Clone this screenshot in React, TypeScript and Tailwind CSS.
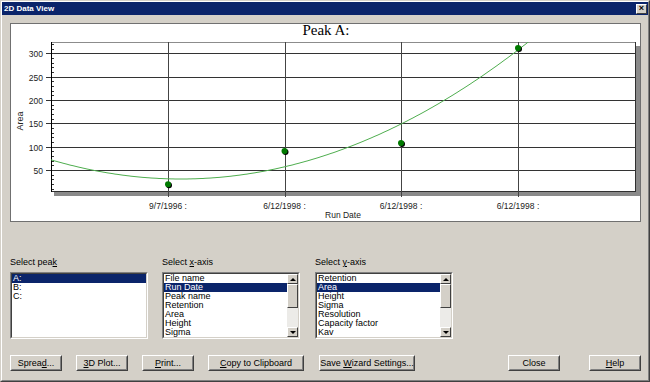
import React from "react";

const ui = "font-['Liberation_Sans_Narrow','Liberation_Sans',sans-serif] text-[9px]";

const yOf = (v: number) => 193.5 - v * 0.4667;
const colX = [168, 284.5, 401, 518];
const points = [
  { x: 168, v: 20 },
  { x: 284.5, v: 91 },
  { x: 401, v: 108 },
  { x: 518, v: 312 },
];

// fitted curve in screen coords
const curve = (() => {
  const pts: string[] = [];
  for (let x = 51; x <= 540; x += 2) {
    const y = 179 - 0.001136 * (x - 181) * (x - 181);
    pts.push(`${x},${y.toFixed(1)}`);
  }
  return pts.join(" ");
})();

function Chart() {
  const majors = [50, 100, 150, 200, 250, 300];
  const minors: number[] = [];
  for (let v = 10; v <= 320; v += 10) if (v % 50 !== 0) minors.push(v);

  return (
    <svg width={629} height={184} className="block font-['Liberation_Sans',sans-serif]">
      <defs>
        <clipPath id="plot">
          <rect x={51} y={42} width={584} height={149} />
        </clipPath>
      </defs>
      <g transform="translate(-11,-37)">
        {/* shadow */}
        <rect x={636} y={46} width={5} height={150} fill="#8a8a8a" />
        <rect x={54} y={192} width={587} height={4} fill="#8a8a8a" />

        <rect x={51} y={42} width={584} height={149} fill="#fff" />
        <line x1={51} y1={42.5} x2={635} y2={42.5} stroke="#8c8c8c" />
        <line x1={635.5} y1={42} x2={635.5} y2={192} stroke="#303030" />
        <line x1={51} y1={191.5} x2={636} y2={191.5} stroke="#303030" />

        {majors.map((v) => (
          <g key={v}>
            <line x1={46} y1={Math.round(yOf(v)) + 0.5} x2={635} y2={Math.round(yOf(v)) + 0.5} stroke="#333" />
            <text x={43} y={Math.round(yOf(v)) + 3.5} fontSize={8.5} textAnchor="end" fill="#222">
              {v}
            </text>
          </g>
        ))}
        {minors.map((v) => (
          <line key={v} x1={51} y1={Math.round(yOf(v)) + 0.5} x2={54} y2={Math.round(yOf(v)) + 0.5} stroke="#333" />
        ))}

        {colX.map((x, i) => (
          <g key={i}>
            <line x1={Math.round(x) + 0.5} y1={42} x2={Math.round(x) + 0.5} y2={197} stroke="#444" />
            <text x={x} y={209} fontSize={8.5} textAnchor="middle" fill="#222">
              {i === 0 ? "9/7/1996 :" : "6/12/1998 :"}
            </text>
          </g>
        ))}

        <line x1={51.5} y1={42} x2={51.5} y2={192} stroke="#000" />

        <polyline points={curve} fill="none" stroke="#4fae4f" strokeWidth={1} clipPath="url(#plot)" />

        {points.map((p, i) => (
          <g key={i}>
            <circle cx={p.x + 1} cy={yOf(p.v) + 1} r={3} fill="#000" />
            <circle cx={p.x} cy={yOf(p.v)} r={3} fill="#007a00" />
          </g>
        ))}

        <text x={343} y={218} fontSize={8.5} textAnchor="middle" fill="#222">
          Run Date
        </text>
        <text transform="translate(23,121) rotate(-90)" fontSize={9} textAnchor="middle" fill="#222">
          Area
        </text>
      </g>
    </svg>
  );
}

function Arrow({ up }: { up: boolean }) {
  return (
    <div className="h-[10px] bg-[#d4d0c8] border border-t-white border-l-white border-r-[#404040] border-b-[#404040] flex items-center justify-center">
      {up ? (
        <div className="w-0 h-0 border-x-[3px] border-x-transparent border-b-[3px] border-b-black" />
      ) : (
        <div className="w-0 h-0 border-x-[3px] border-x-transparent border-t-[3px] border-t-black" />
      )}
    </div>
  );
}

function ScrollBar() {
  return (
    <div className="w-[11px] h-full flex flex-col bg-[#ecebe8]">
      <Arrow up />
      <div className="h-[24px] bg-[#d4d0c8] border border-t-white border-l-white border-r-[#404040] border-b-[#404040]" />
      <div className="flex-1" />
      <Arrow up={false} />
    </div>
  );
}

function ListBox({ items, selected, scroll }: { items: string[]; selected: number; scroll?: boolean }) {
  return (
    <div className="w-[138px] h-[67px] border border-t-[#808080] border-l-[#808080] border-r-white border-b-white">
      <div className="h-full bg-white border border-t-[#404040] border-l-[#404040] border-r-[#d4d0c8] border-b-[#d4d0c8] flex overflow-hidden">
        <div className="flex-1 overflow-hidden">
          {items.map((it, i) => (
            <div
              key={it}
              className={`h-[9px] leading-[9px] pl-[1px] whitespace-nowrap ${
                i === selected ? "bg-[#0a246a] text-white" : "text-black"
              }`}
            >
              {it}
            </div>
          ))}
        </div>
        {scroll && <ScrollBar />}
      </div>
    </div>
  );
}

function Btn({ w, children }: { w: string; children: React.ReactNode }) {
  return (
    <div className={`${w} h-[16px] bg-[#d4d0c8] border border-t-white border-l-white border-r-[#404040] border-b-[#404040]`}>
      <div className="h-full border border-t-[#d4d0c8] border-l-[#d4d0c8] border-r-[#808080] border-b-[#808080] flex items-center justify-center text-black leading-none">
        <span className="whitespace-nowrap">{children}</span>
      </div>
    </div>
  );
}

export default function App() {
  return (
    <div className={`w-[650px] h-[382px] bg-[#d4d0c8] border border-t-[#d4d0c8] border-l-[#d4d0c8] border-r-[#404040] border-b-[#404040] ${ui}`}>
      <div className="h-full border border-t-white border-l-white border-r-[#808080] border-b-[#808080] flex flex-col">
        {/* title bar */}
        <div className="h-[13px] bg-[#0a246a] flex items-center justify-between pl-[2px] pr-[1px]">
          <span className="font-['Liberation_Sans',sans-serif] font-bold text-[8px] text-white leading-none">2D Data View</span>
          <div className="w-[11px] h-[10px] bg-[#d4d0c8] border border-t-white border-l-white border-r-[#404040] border-b-[#404040] flex items-center justify-center text-[9px] font-bold leading-none text-black">
            ×
          </div>
        </div>

        {/* chart panel */}
        <div className="ml-[8px] mt-[8px] w-[631px] h-[199px] bg-white border border-[#707070] flex flex-col">
          <div className="h-[13px] text-center font-['Liberation_Serif',serif] text-[15px] leading-[13px] text-black pl-[1px]">
            Peak A:
          </div>
          <Chart />
        </div>

        {/* selectors */}
        <div className="ml-[8px] mt-[35px] flex gap-[14px]">
          <div className="flex flex-col">
            <div className="h-[11px] leading-[11px] mb-[4px] text-black">
              Select pea<u>k</u>
            </div>
            <ListBox items={["A:", "B:", "C:"]} selected={0} />
          </div>
          <div className="flex flex-col">
            <div className="h-[11px] leading-[11px] mb-[4px] text-black">
              Select <u>x</u>-axis
            </div>
            <ListBox
              items={["File name", "Run Date", "Peak name", "Retention", "Area", "Height", "Sigma", "Resolution"]}
              selected={1}
              scroll
            />
          </div>
          <div className="flex flex-col ml-[1px]">
            <div className="h-[11px] leading-[11px] mb-[4px] text-black">
              Select <u>y</u>-axis
            </div>
            <ListBox
              items={["Retention", "Area", "Height", "Sigma", "Resolution", "Capacity factor", "Kav", "Plate height (HETP) Theoretical"]}
              selected={1}
              scroll
            />
          </div>
        </div>

        {/* buttons */}
        <div className="ml-[8px] mt-[16px] flex">
          <div className="flex gap-[14px]">
            <Btn w="w-[52px]">
              Sprea<u>d</u>...
            </Btn>
            <Btn w="w-[52px]">
              <u>3</u>D Plot...
            </Btn>
            <Btn w="w-[52px]">
              <u>P</u>rint...
            </Btn>
            <Btn w="w-[96px]">
              <u>C</u>opy to Clipboard
            </Btn>
          </div>
          <div className="ml-[15px]">
            <Btn w="w-[96px]">
              Save <u>W</u>izard Settings...
            </Btn>
          </div>
          <div className="ml-[93px] flex gap-[29px]">
            <Btn w="w-[52px]">Close</Btn>
            <Btn w="w-[52px]">
              <u>H</u>elp
            </Btn>
          </div>
        </div>
      </div>
    </div>
  );
}
